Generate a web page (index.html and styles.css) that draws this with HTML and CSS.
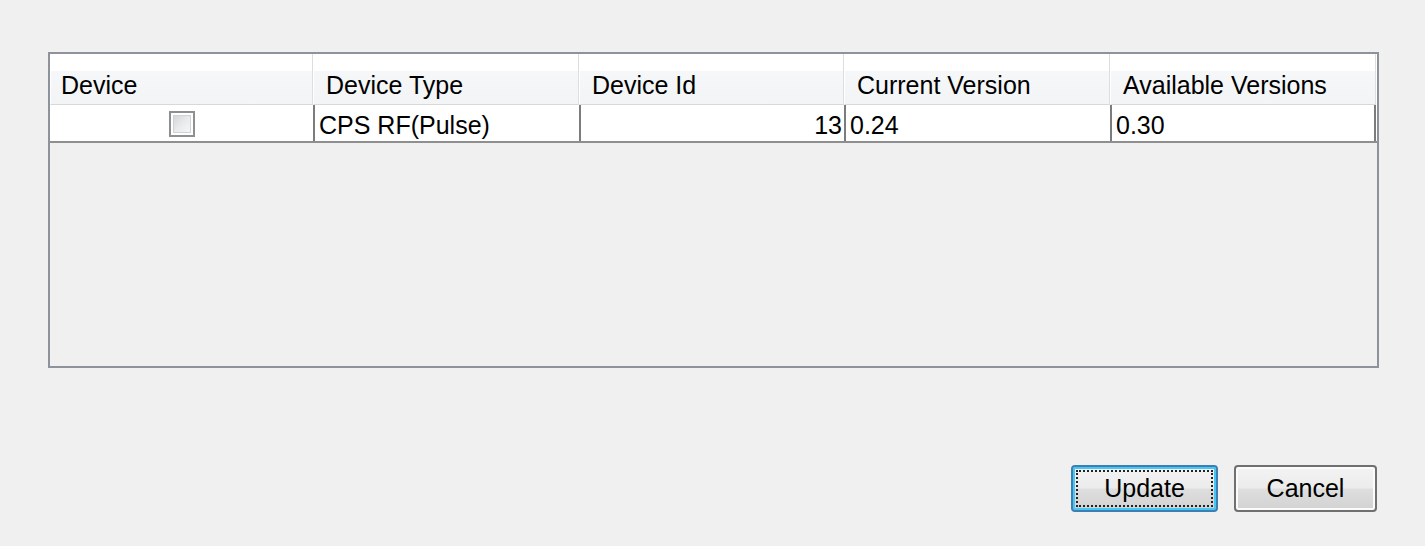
FILE: index.html
```html
<!DOCTYPE html>
<html>
<head>
<meta charset="utf-8">
<link rel="stylesheet" href="styles.css">
</head>
<body>
<div class="dialog">
  <div class="table">
    <div class="row head">
      <div class="hcell">Device</div>
      <div class="hcell">Device Type</div>
      <div class="hcell">Device Id</div>
      <div class="hcell">Current Version</div>
      <div class="hcell">Available Versions</div>
    </div>
    <div class="row data">
      <div class="dcell center"><span class="check"><span class="check-inner"></span></span></div>
      <div class="dcell sep">CPS RF(Pulse)</div>
      <div class="dcell sep right">13</div>
      <div class="dcell sep">0.24</div>
      <div class="dcell sep last">0.30</div>
    </div>
  </div>
  <div class="buttons">
    <button class="btn primary"><span class="focus">Update</span></button>
    <button class="btn">Cancel</button>
  </div>
</div>
</body>
</html>
```
FILE: styles.css
```css
html, body {
  margin: 0;
  padding: 0;
  background: #f0f0f0;
}
body {
  font-family: "Liberation Sans", Arial, sans-serif;
  font-size: 25px;
  color: #000;
}
.dialog {
  padding: 52px 0 0 48px;
  width: 1331px;
}
.table {
  box-sizing: border-box;
  width: 1331px;
  height: 316px;
  border: 2px solid #8e929a;
  background: #f0f0f0;
}
.row {
  display: grid;
  grid-template-columns: 263px 266px 265px 266px 266px;
}
.head {
  height: 51px;
  background: #fff;
}
.hcell {
  box-sizing: border-box;
  height: 51px;
  padding: 17px 0 0 12px;
  background: linear-gradient(to bottom, #ffffff 0, #ffffff 34%, #f6f7f9 34%, #f3f4f6 100%);
  border-right: 1px solid #dedede;
  border-left: 1px solid #ffffff;
  border-bottom: 1px solid #d8d8d8;
  line-height: 28px;
  white-space: nowrap;
}
.hcell:first-child {
  padding-left: 10px;
}
.data {
  height: 38px;
  background: #fff;
  border-bottom: 2px solid #8f8f8f;
  box-sizing: border-box;
}
.dcell {
  box-sizing: border-box;
  height: 36px;
  padding: 6px 0 0 4px;
  line-height: 28px;
  white-space: nowrap;
}
.dcell.sep {
  border-left: 2px solid #7c7c7c;
}
.dcell.last {
  border-right: 2px solid #7c7c7c;
}
.dcell.right {
  text-align: right;
  padding-right: 2px;
}
.dcell.center {
  display: flex;
  justify-content: center;
  align-items: center;
  padding: 2px 0 0 0;
}
.check {
  box-sizing: border-box;
  width: 26px;
  height: 26px;
  border: 2px solid #8e8f8f;
  padding: 2px;
  background: #fff;
  display: block;
}
.check-inner {
  display: block;
  width: 100%;
  height: 100%;
  background: linear-gradient(135deg, #d2d4d8 0, #e9eaec 50%, #f8f8f9 100%);
  box-shadow: inset 0 0 0 1px #d0d2d6;
}
.buttons {
  display: flex;
  justify-content: flex-end;
  gap: 16px;
  margin-top: 97px;
  padding-right: 2px;
}
.btn {
  box-sizing: border-box;
  height: 47px;
  width: 143px;
  font-family: "Liberation Sans", Arial, sans-serif;
  font-size: 25px;
  color: #000;
  border: 2px solid #707070;
  border-radius: 4px;
  background: linear-gradient(to bottom, #f3f3f3 0, #ececec 48%, #dedede 52%, #d2d2d2 100%);
  box-shadow: inset 0 0 0 2px #fbfbfb;
  padding: 0;
  display: flex;
  align-items: center;
  justify-content: center;
}
.btn.primary {
  width: 147px;
  border-color: #3c7fb1;
  box-shadow: inset 0 0 0 2px #48c6f5;
  padding: 4px;
}
.focus {
  box-sizing: border-box;
  width: 100%;
  height: 100%;
  display: flex;
  align-items: center;
  justify-content: center;
  outline: 2px dotted #222;
  outline-offset: -1px;
}
```
